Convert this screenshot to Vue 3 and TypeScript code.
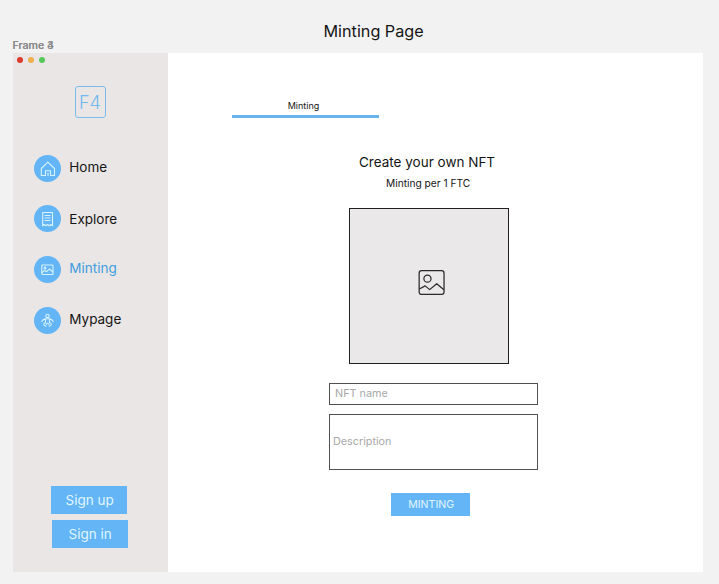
<script setup lang="ts">
import { ref } from 'vue'

interface NavItem {
  id: string
  label: string
}

const items: NavItem[] = [
  { id: 'home', label: 'Home' },
  { id: 'explore', label: 'Explore' },
  { id: 'minting', label: 'Minting' },
  { id: 'mypage', label: 'Mypage' },
]
const active = ref('minting')
const nftName = ref('')
const description = ref('')
</script>

<template>
  <div class="canvas">
    <h1 class="title">Minting Page</h1>
    <div class="frame-label"><span>Frame 4</span><span>Frame 3</span></div>
    <div class="frame">
      <aside class="sidebar">
        <div class="dots"><i class="red"></i><i class="amber"></i><i class="green"></i></div>
        <div class="logo">F4</div>
        <nav class="nav">
          <a v-for="item in items" :key="item.id" class="item" :class="[item.id, { active: active === item.id }]" @click="active = item.id">
            <span class="bubble">
              <svg viewBox="0 0 27 27" width="27" height="27" fill="none" stroke="#d6f3ff" stroke-width="1.1" stroke-linejoin="round" stroke-linecap="round">
                <path v-if="item.id === 'home'" d="M7.3 13.5 13.8 7.2l6.7 6.3v7h-4v-4.8h-5v4.8H7.3zM14 18v2.5" />
                <template v-else-if="item.id === 'explore'">
                  <path d="M8.7 7.5h9.8v13.3l-1.6-1.3-1.6 1.3-1.7-1.3-1.7 1.3-1.6-1.3-1.6 1.3z" />
                  <path d="M11 10.5h5M11 13h5M11 15.5h5" />
                </template>
                <template v-else-if="item.id === 'minting'">
                  <rect x="7.8" y="9" width="11.2" height="9.5" rx=".8" />
                  <circle cx="11" cy="12" r="1" />
                  <path d="m8 16.5 2.5-2 2 1.2 3-2.7 3.2 3" />
                </template>
                <template v-else>
                  <circle cx="13.5" cy="8.9" r="1.7" />
                  <path d="M7.8 14.6c1-2 2.4-2.9 4.2-2.9h3c1.8 0 3.2.9 4.2 2.9M11.5 12v3.4M15.5 12v3.4M11.5 15.4c-1.6.8-2.2 1.8-1.4 2.7l1.7 1.2M15.5 15.4c1.6.8 2.2 1.8 1.4 2.7l-1.7 1.2M12 17.2l1.5-.9 1.5.9" />
                </template>
              </svg>
            </span>
            <span class="text">{{ item.label }}</span>
          </a>
        </nav>
        <div class="auth">
          <button>Sign up</button>
          <button class="signin">Sign in</button>
        </div>
      </aside>
      <main class="main">
        <div class="tab"><span>Minting</span></div>
        <h2>Create your own NFT</h2>
        <p>Minting per 1 FTC</p>
        <div class="upload">
          <svg viewBox="0 0 28 28" width="27" height="27" fill="none" stroke="#2b2a2b" stroke-width="1.3" stroke-linejoin="round">
            <rect x="1.2" y="1.8" width="25.8" height="24.6" rx="2.5" />
            <circle cx="9.8" cy="10" r="3.7" />
            <path d="m1.4 20.8 6-3.3 4.7 3.9 7.3-6.2 7.5 6.3" />
          </svg>
        </div>
        <input v-model="nftName" class="field name" placeholder="NFT name" />
        <input v-model="description" class="field desc" placeholder="Description" />
        <button class="mint">MINTING</button>
      </main>
    </div>
  </div>
</template>

<style>
body {
  background: #f2f2f2;
}
</style>

<style scoped>
.canvas {
  box-sizing: border-box;
  width: 719px;
  height: 584px;
  padding: 19px 16px 12px 12.5px;
  overflow: hidden;
  background: #f2f2f2;
  color: #151515;
  font-family: Inter, sans-serif;
}
h1, h2, p {
  margin: 0;
  font-weight: 400;
}
.title {
  margin-left: 311px;
  height: 19px;
  line-height: 24px;
  font-size: 16.2px;
  white-space: nowrap;
}
.frame-label {
  display: grid;
  height: 15px;
  line-height: 15px;
  font-size: 10.6px;
  font-weight: 500;
  color: #8c8c8c;
}
.frame-label span {
  grid-area: 1 / 1;
}
.frame {
  display: flex;
  width: 690px;
  height: 519px;
  background: #fff;
}
.sidebar {
  box-sizing: border-box;
  display: flex;
  flex-direction: column;
  flex: none;
  width: 155.5px;
  height: 519px;
  padding-bottom: 24px;
  background: #eae6e5;
}
.dots {
  display: flex;
  gap: 5px;
  padding: 4px 0 0 4.8px;
}
.dots i {
  width: 6px;
  height: 6px;
  border-radius: 50%;
}
.red { background: #dc3a2c; }
.amber { background: #eeb04d; }
.green { background: #55c85b; }
.logo {
  box-sizing: border-box;
  width: 31px;
  height: 32px;
  margin: 23px 0 0 62px;
  border: 1.5px solid #7abbea;
  border-radius: 3px;
  color: #72b9ee;
  font-size: 18px;
  font-weight: 300;
  line-height: 31px;
  text-align: center;
}
.nav {
  display: flex;
  flex-direction: column;
  gap: 23.7px;
  margin: 36.5px 0 0 21.3px;
}
.item {
  display: flex;
  align-items: center;
  gap: 8.5px;
  height: 27px;
  font-size: 13.5px;
  cursor: pointer;
}
.bubble {
  width: 27px;
  height: 27px;
  border-radius: 50%;
  background: #63b5f6;
}
.bubble svg {
  display: block;
}
.text {
  line-height: 20px;
  padding-bottom: 2px;
}
.explore .text {
  padding-bottom: 0;
}
.active {
  color: #3f9de0;
}
.auth {
  display: flex;
  flex-direction: column;
  gap: 6px;
  margin: auto 0 0 38.7px;
}
button {
  border: 0;
  padding: 0;
  background: #63b5f6;
  color: #e0f6ff;
  font-family: inherit;
}
.auth button {
  width: 76px;
  height: 28px;
  padding: 0 0 1px 1px;
  font-size: 13.5px;
}
.auth .signin {
  margin-left: 1px;
  padding-left: 0;
}
.main {
  display: flex;
  flex-direction: column;
  align-items: flex-start;
  flex: 1;
}
.tab {
  box-sizing: border-box;
  width: 147px;
  height: 22px;
  margin: 43px 0 0 64px;
  padding-right: 4px;
  border-bottom: 3px solid #68b5ee;
  font-size: 9px;
  line-height: 19px;
  text-align: center;
}
h2 {
  margin: 34px 0 0 191px;
  font-size: 13.5px;
  line-height: 20px;
  white-space: nowrap;
}
p {
  margin: 4px 0 0 218px;
  font-size: 10.2px;
  line-height: 14px;
  white-space: nowrap;
}
.upload {
  box-sizing: border-box;
  display: flex;
  align-items: center;
  justify-content: center;
  width: 160px;
  height: 156px;
  margin: 18px 0 0 181px;
  padding: 0 0 8px 5px;
  border: 1.4px solid #202020;
  background: #eae8e9;
}
.field {
  box-sizing: border-box;
  width: 209px;
  margin-left: 161px;
  border: 1px solid #505050;
  outline: 0;
  background: #fff;
  font-family: inherit;
  font-size: 10.8px;
}
.field::placeholder {
  color: #a8a8a8;
  opacity: 1;
}
.name {
  height: 22px;
  margin-top: 19px;
  padding: 0 5px 2px;
}
.desc {
  height: 56px;
  margin-top: 9px;
  padding: 0 3px 1px;
}
.mint {
  width: 79px;
  height: 23px;
  margin: 23px 0 0 223.2px;
  padding-left: 1px;
  font-size: 10.6px;
}
</style>
